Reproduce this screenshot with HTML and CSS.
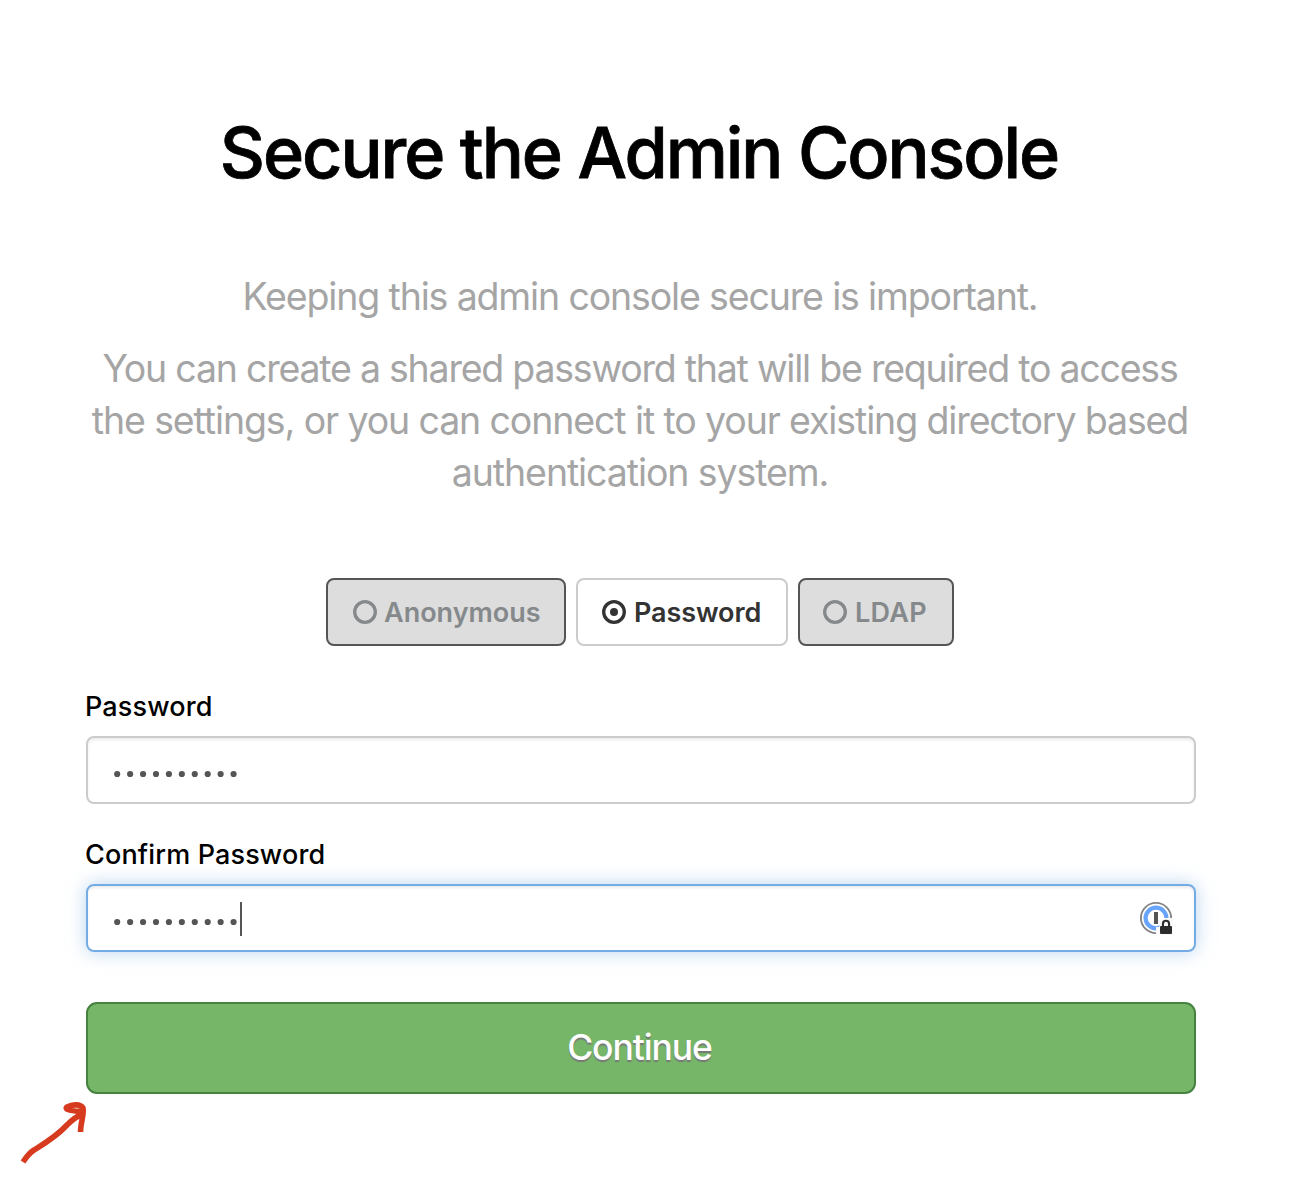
FILE: index.html
```html
<!DOCTYPE html>
<html lang="en">
<head>
<meta charset="utf-8">
<title>Secure the Admin Console</title>
<link rel="stylesheet" href="styles.css">
</head>
<body>
<main class="page">
  <h1 class="title"><span>Secure the Admin Console</span></h1>
  <div class="intro">
    <p><span class="l1">Keeping this admin console secure is important.</span></p>
    <p><span class="l2">You can create a shared password that will be required to access</span><br><span class="l3">the settings, or you can connect it to your existing directory based</span><br><span class="l4">authentication system.</span></p>
  </div>
  <div class="methods">
    <button class="method anonymous" type="button"><svg class="dot" viewBox="0 0 24 24"><circle cx="12" cy="12" r="10.3"/></svg><span>Anonymous</span></button>
    <button class="method selected" type="button"><svg class="dot" viewBox="0 0 24 24"><circle cx="12" cy="12" r="10.3"/><circle class="fill" cx="12" cy="12" r="4"/></svg><span>Password</span></button>
    <button class="method ldap" type="button"><svg class="dot" viewBox="0 0 24 24"><circle cx="12" cy="12" r="10.3"/></svg><span>LDAP</span></button>
  </div>
  <form class="form">
    <div class="label"><span class="lab1">Password</span></div>
    <div class="field">
      <svg class="mask" viewBox="0 0 125 8"><path d="M3.2 4h116.5"/></svg>
    </div>
    <div class="label"><span class="lab2">Confirm Password</span></div>
    <div class="field focused">
      <svg class="mask" viewBox="0 0 125 8"><path d="M3.2 4h116.5"/></svg>
      <i class="caret"></i>
      <svg class="manager" viewBox="0 0 34 34">
        <circle cx="17" cy="17" r="15.1" fill="none" stroke="#858585" stroke-width="1.9"/>
        <circle cx="17" cy="17" r="10.4" fill="none" stroke="#68a4fb" stroke-width="4.2"/>
        <path d="M15 11h4v12h-4z" fill="#555"/>
        <path d="M17 34V26h3l2-6 3-3h9v17z" fill="#fafafa"/>
        <path d="M22.900 25v-2.200a4.100 4.100 0 0 1 8.200 0V25H32q1 0 1 1v6q0 1-1 1H22q-1 0-1-1v-6q0-1 1-1z" fill="#2d2d2d"/>
        <path d="M25 25v-2.300a2 2 0 0 1 4 0V25z" fill="#fafafa"/>
      </svg>
    </div>
    <button class="continue" type="button"><span>Continue</span></button>
  </form>
  <svg class="arrow" viewBox="0 0 80 72"><path d="M3 67C7 61 9 58 14 55C22 50 36 42 47 30Q55 22 61 20M60.500 37C60.500 28 64.500 18 63 13C60 8 51 10 47 12C43 15 55 16 62 17"/></svg>
</main>
</body>
</html>
```
FILE: styles.css
```css
* { box-sizing: border-box; }
body {
  margin: 0;
  background: #fff;
  font-family: Inter, "Liberation Sans", sans-serif;
  color: #000;
}
.page {
  position: relative;
  width: 1312px;
  height: 1196px;
  padding: 109px 116px 0 86px;
  overflow: hidden;
}
.title {
  margin: 0;
  padding-right: 4px;
  height: 88px;
  line-height: 88px;
  font-size: 70px;
  font-weight: 500;
  text-align: center;
  white-space: nowrap;
}
.title span { letter-spacing: -2.05px; -webkit-text-stroke: .8px #000; }
.intro {
  margin: 74px 0 0;
  padding-right: 2px;
  color: #a5a5a5;
  font-size: 37.5px;
  font-weight: 400;
  line-height: 52px;
  text-align: center;
  white-space: nowrap;
}
.intro p { margin: 0 0 20px; }
.l1 { letter-spacing: -1.15px; }
.l2 { letter-spacing: -1.23px; }
.l3 { letter-spacing: -1.12px; }
.l4 { letter-spacing: -1.1px; }
.methods {
  display: flex;
  gap: 10px;
  margin: 79px 0 0 240px;
}
.method {
  display: flex;
  align-items: center;
  gap: 7px;
  width: 240px;
  height: 68px;
  padding: 0 0 0 25px;
  border: 2px solid #555;
  border-radius: 8px;
  background: #ddd;
  color: #85898b;
  font: 600 27px/64px Inter, sans-serif;
  white-space: nowrap;
}
.method span { padding-top: 2px; }
.method.selected { width: 212px; padding-left: 24px; gap: 8px; border-color: #ccc; background: #fff; color: #333; }
.method.selected span { letter-spacing: -.1px; }
.method.ldap { width: 156px; padding-left: 23px; gap: 8px; }
.method.ldap span { letter-spacing: .3px; }
.dot { flex: none; width: 24px; height: 24px; fill: none; stroke: currentColor; stroke-width: 3.3; }
.dot .fill { fill: currentColor; stroke: none; }
.label {
  height: 36px;
  margin: 43px 0 11px -1px;
  line-height: 36px;
  font-size: 27px;
  font-weight: 500;
  letter-spacing: .15px;
  white-space: nowrap;
}
.field + .label { margin: 33px 0 11px -1px; }
.field {
  display: flex;
  align-items: center;
  width: 1110px;
  height: 68px;
  padding: 0 21px 0 26px;
  border: 2px solid #ccc;
  border-radius: 8px;
  box-shadow: inset 0 2px 3px rgba(0,0,0,.08);
}
.field.focused {
  border-color: #73ace4;
  box-shadow: inset 0 2px 3px rgba(0,0,0,.08), 0 0 18px rgba(115,172,228,.5);
}
.mask { width: 125px; height: 8px; margin-top: 7px; fill: none; stroke: #555; stroke-width: 6.2; stroke-linecap: round; stroke-dasharray: 0 12.93; }
.caret { width: 2px; height: 34px; margin: 2px 0 0 1px; background: #555; }
.manager { width: 34px; height: 34px; margin-left: auto; }
.continue {
  display: block;
  width: 1110px;
  height: 92px;
  margin-top: 50px;
  padding: 0 3px 0 0;
  border: 2px solid #468240;
  border-radius: 11px;
  background: #76b668;
  color: #fff;
  font: 500 35.5px/88px Inter, sans-serif;
  letter-spacing: -1.1px;
  text-shadow: 0 2px 1px #777;
}
.arrow {
  position: absolute;
  left: 20px;
  top: 1095px;
  width: 80px;
  height: 72px;
  fill: none;
  stroke: #d63b20;
  stroke-width: 5.6;
  stroke-linejoin: round;
}
```
